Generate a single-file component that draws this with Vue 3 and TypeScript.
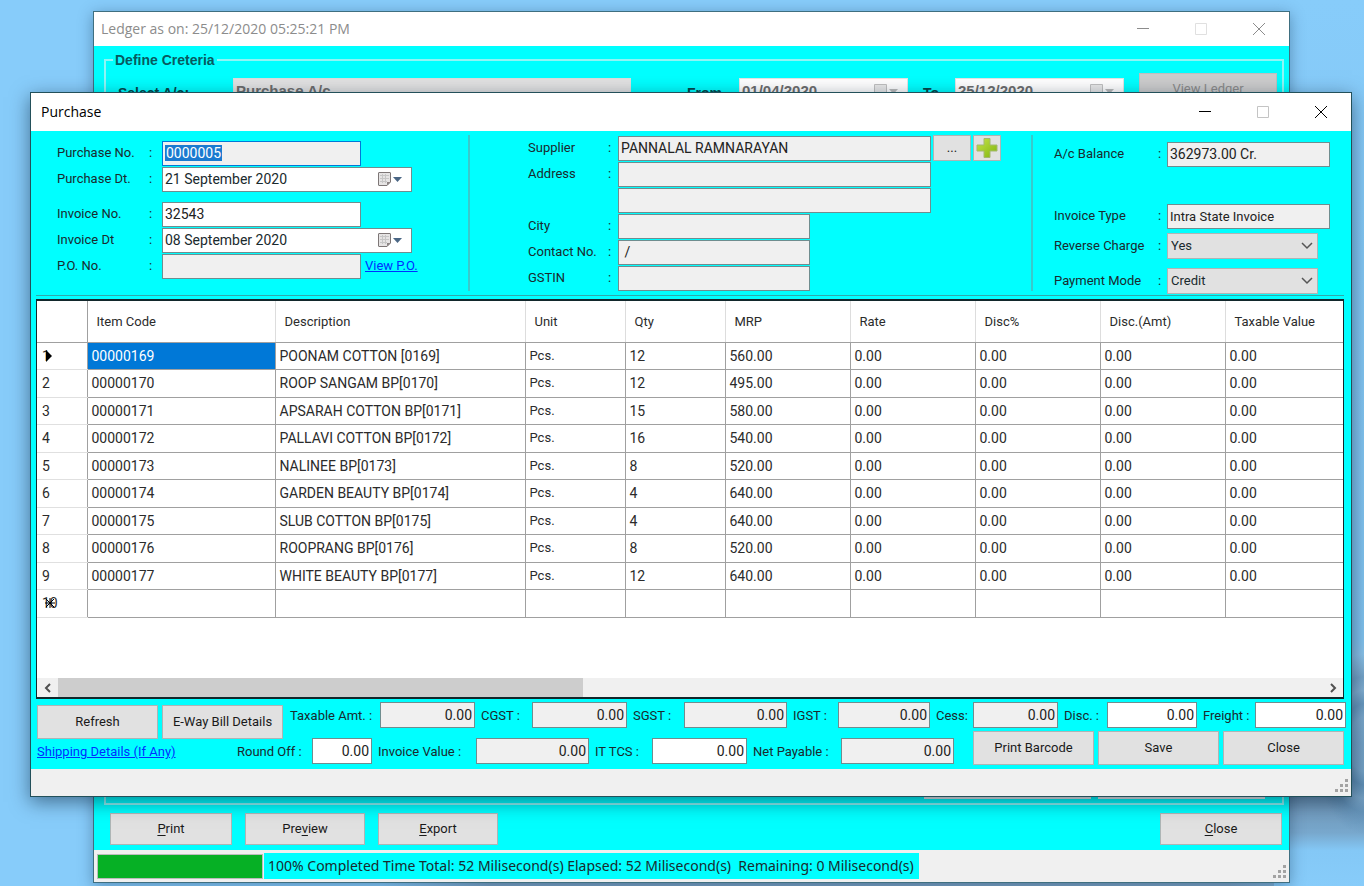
<script setup lang="ts">
import { ref } from 'vue'

interface Item {
  code: string
  name: string
  qty: string
  mrp: string
}

interface Amount {
  id: string
  label: string
  editable?: boolean
}

const items: Item[] = [
  { code: '00000169', name: 'POONAM COTTON [0169]', qty: '12', mrp: '560.00' },
  { code: '00000170', name: 'ROOP SANGAM BP[0170]', qty: '12', mrp: '495.00' },
  { code: '00000171', name: 'APSARAH COTTON BP[0171]', qty: '15', mrp: '580.00' },
  { code: '00000172', name: 'PALLAVI COTTON BP[0172]', qty: '16', mrp: '540.00' },
  { code: '00000173', name: 'NALINEE BP[0173]', qty: '8', mrp: '520.00' },
  { code: '00000174', name: 'GARDEN BEAUTY BP[0174]', qty: '4', mrp: '640.00' },
  { code: '00000175', name: 'SLUB COTTON BP[0175]', qty: '4', mrp: '640.00' },
  { code: '00000176', name: 'ROOPRANG BP[0176]', qty: '8', mrp: '520.00' },
  { code: '00000177', name: 'WHITE BEAUTY BP[0177]', qty: '12', mrp: '640.00' },
]

const headers = ['Item Code', 'Description', 'Unit', 'Qty', 'MRP', 'Rate', 'Disc%', 'Disc.(Amt)', 'Taxable Value']

const taxes: Amount[] = [
  { id: 'taxable', label: 'Taxable Amt. :' },
  { id: 'cgst', label: 'CGST :' },
  { id: 'sgst', label: 'SGST :' },
  { id: 'igst', label: 'IGST :' },
  { id: 'cess', label: 'Cess:' },
  { id: 'disc', label: 'Disc. :', editable: true },
  { id: 'freight', label: 'Freight :', editable: true },
]

const totals: Amount[] = [
  { id: 'round', label: 'Round Off :', editable: true },
  { id: 'value', label: 'Invoice Value :' },
  { id: 'tcs', label: 'IT TCS :', editable: true },
  { id: 'net', label: 'Net Payable :' },
]

const reverseCharge = ref('Yes')
const paymentMode = ref('Credit')
</script>

<template>
  <div class="desktop">
    <section class="window ledger" aria-label="Ledger">
      <header class="titlebar">
        <span class="title">Ledger as on: 25/12/2020 05:25:21 PM</span>
        <button class="cap" aria-label="Minimize"><svg width="14" height="14"><path d="M1 6.5h12" /></svg></button>
        <button class="cap off" aria-label="Maximize" disabled><svg width="14" height="14"><path d="M1.5 1.5h11v11h-11z" /></svg></button>
        <button class="cap" aria-label="Close window"><svg width="14" height="14"><path d="M1 1l12 12M13 1L1 13" /></svg></button>
      </header>
      <div class="ledger-body">
        <fieldset class="criteria">
          <legend>Define Creteria</legend>
          <div class="criteria-row">
            <label for="account">Select A/c:</label>
            <input id="account" class="box" value="Purchase A/c" disabled />
            <label for="from">From</label>
            <span class="date dim"><input id="from" value="01/04/2020" disabled /><svg class="cal" width="28" height="16" viewBox="0 0 28 16"><path class="sheet" d="M1.5 1.5h12v12h-12z" /><path class="arrow" d="M16 6h9l-4.500 5z" /></svg></span>
            <label for="to">To</label>
            <span class="date dim"><input id="to" value="25/12/2020" disabled /><svg class="cal" width="28" height="16" viewBox="0 0 28 16"><path class="sheet" d="M1.5 1.5h12v12h-12z" /><path class="arrow" d="M16 6h9l-4.500 5z" /></svg></span>
            <button class="btn view" disabled>View Ledger</button>
          </div>
          <div class="sums">
            <input class="box" value="11483441.0" aria-label="Debit total" readonly />
            <input class="box" aria-label="Credit total" readonly />
          </div>
        </fieldset>
        <div class="actions">
          <button class="btn end"><u>P</u>rint</button>
          <button class="btn">Pre<u>v</u>iew</button>
          <button class="btn"><u>E</u>xport</button>
          <button class="btn end last"><u>C</u>lose</button>
        </div>
      </div>
      <footer class="status">
        <span class="progress" role="progressbar" aria-valuenow="100"></span>
        <span class="message">100% Completed Time Total: 52 Milisecond(s) Elapsed: 52 Milisecond(s)&nbsp; Remaining: 0 Milisecond(s)</span>
        <svg class="grip" width="14" height="14"><path d="M10 0h3v3h-3zM5 5h3v3h-3zM10 5h3v3h-3zM0 10h3v3h-3zM5 10h3v3h-3zM10 10h3v3h-3z" /></svg>
      </footer>
    </section>

    <main class="window purchase">
      <header class="titlebar">
        <span class="title">Purchase</span>
        <button class="cap" aria-label="Minimize"><svg width="14" height="14"><path d="M1 6.5h12" /></svg></button>
        <button class="cap off" aria-label="Maximize" disabled><svg width="14" height="14"><path d="M1.5 1.5h11v11h-11z" /></svg></button>
        <button class="cap" aria-label="Close window"><svg width="14" height="14"><path d="M1 1l12 12M13 1L1 13" /></svg></button>
      </header>

      <div class="body">
        <div class="panels">
          <section class="panel invoice">
            <div class="row"><label for="pno">Purchase No.</label><i>:</i><span class="box focus"><mark>0000005</mark><input id="pno" readonly /></span></div>
            <div class="row"><label for="pdt">Purchase Dt.</label><i>:</i>
              <span class="date"><input id="pdt" value="21 September 2020" /><svg class="cal" width="28" height="16" viewBox="0 0 28 16"><path class="sheet" d="M2 1.5h11q.5 0 .5 .5v9l-3.500 3.500h-8q-.5 0-.5-.5v-12q0-.5 .5-.5z" /><path class="lines" d="M3 4.500h9M3 7.500h9M3 10.500h7M5.500 3v9M8.500 3v9" /><path class="fold" d="M13.500 11h-3.500v3.500z" /><path class="arrow" d="M16 6h9l-4.500 5z" /></svg></span>
            </div>
            <div class="row apart"><label for="ino">Invoice No.</label><i>:</i><input id="ino" class="box white" value="32543" /></div>
            <div class="row"><label for="idt">Invoice Dt</label><i>:</i>
              <span class="date"><input id="idt" value="08 September 2020" /><svg class="cal" width="28" height="16" viewBox="0 0 28 16"><path class="sheet" d="M2 1.5h11q.5 0 .5 .5v9l-3.500 3.500h-8q-.5 0-.5-.5v-12q0-.5 .5-.5z" /><path class="lines" d="M3 4.500h9M3 7.500h9M3 10.500h7M5.500 3v9M8.500 3v9" /><path class="fold" d="M13.500 11h-3.500v3.500z" /><path class="arrow" d="M16 6h9l-4.500 5z" /></svg></span>
            </div>
            <div class="row"><label for="po">P.O. No.</label><i>:</i><input id="po" class="box" readonly /><a href="#">View P.O.</a></div>
          </section>

          <section class="panel supplier">
            <div class="row"><label for="sup">Supplier</label><i>:</i><input id="sup" class="box wide" value="PANNALAL RAMNARAYAN" readonly />
              <button class="btn small" aria-label="Browse suppliers">...</button>
              <button class="btn small plus" aria-label="Add supplier">
                <svg width="24" height="22" viewBox="0 0 24 22">
                  <defs><linearGradient id="leaf" x1="0" y1="0" x2="1" y2="1"><stop offset="0" stop-color="#c6e34a" /><stop offset="1" stop-color="#7fb50d" /></linearGradient></defs>
                  <path fill="url(#leaf)" stroke="#a3b870" d="M9 1.500h6v6.500h7v6h-7v6.500h-6v-6.500h-7v-6h7z" />
                </svg>
              </button>
            </div>
            <div class="row"><label for="ad1">Address</label><i>:</i><input id="ad1" class="box wide" readonly /></div>
            <div class="row"><label></label><i></i><input class="box wide" aria-label="Address line 2" readonly /></div>
            <div class="row"><label for="city">City</label><i>:</i><input id="city" class="box" readonly /></div>
            <div class="row"><label for="tel">Contact No.</label><i>:</i><input id="tel" class="box" value=" /" readonly /></div>
            <div class="row"><label for="gst">GSTIN</label><i>:</i><input id="gst" class="box" readonly /></div>
          </section>

          <section class="panel payment">
            <div class="row"><label for="bal">A/c Balance</label><i>:</i><input id="bal" class="box" value="362973.00 Cr." readonly /></div>
            <div class="row type"><label for="typ">Invoice Type</label><i>:</i><input id="typ" class="box text" value="Intra State Invoice" readonly /></div>
            <div class="row charge"><label for="rev">Reverse Charge</label><i>:</i>
              <span class="combo"><select id="rev" v-model="reverseCharge"><option>Yes</option><option>No</option></select><svg width="12" height="8"><path d="M1 1l5 5 5-5" /></svg></span>
            </div>
            <div class="row mode"><label for="mod">Payment Mode</label><i>:</i>
              <span class="combo"><select id="mod" v-model="paymentMode"><option>Credit</option><option>Cash</option></select><svg width="12" height="8"><path d="M1 1l5 5 5-5" /></svg></span>
            </div>
          </section>
        </div>

        <div class="grid">
          <table>
            <colgroup><col class="c0" /><col class="c1" /><col class="c2" /><col class="c3" /><col class="c3" /><col class="c4" /><col class="c4" /><col class="c4" /><col class="c4" /><col /></colgroup>
            <thead>
              <tr><th aria-label="Row"></th><th v-for="h in headers" :key="h">{{ h }}</th></tr>
            </thead>
            <tbody>
              <tr v-for="(item, n) in items" :key="item.code">
                <th scope="row"><span class="mark">{{ n + 1 }}<svg v-if="n === 0" width="10" height="12"><path d="M2 0l6 6-6 6z" /></svg></span></th>
                <td :class="{ current: n === 0 }">{{ item.code }}</td>
                <td>{{ item.name }}</td>
                <td class="unit">Pcs.</td>
                <td>{{ item.qty }}</td>
                <td>{{ item.mrp }}</td>
                <td v-for="k in 4" :key="k">0.00</td>
              </tr>
              <tr>
                <th scope="row"><span class="mark">10<svg class="star" width="12" height="12"><path d="M6 1v10M1 6h10M2 2l8 8M10 2l-8 8" /></svg></span></th>
                <td v-for="k in 9" :key="k"></td>
              </tr>
            </tbody>
          </table>
          <div class="scroll">
            <button aria-label="Scroll left"><svg width="10" height="10"><path d="M7 1L3 5l4 4" /></svg></button>
            <span class="track"><span class="thumb"></span></span>
            <button aria-label="Scroll right"><svg width="10" height="10"><path d="M3 1l4 4-4 4" /></svg></button>
          </div>
        </div>

        <div class="foot taxes">
          <button class="btn tall">Refresh</button>
          <button class="btn tall">E-Way Bill Details</button>
          <template v-for="t in taxes" :key="t.id">
            <label :for="t.id">{{ t.label }}</label>
            <input :id="t.id" class="box num" :class="{ white: t.editable }" value="0.00" :readonly="!t.editable" />
          </template>
        </div>
        <div class="foot totals">
          <a href="#">Shipping Details (If Any)</a>
          <template v-for="t in totals" :key="t.id">
            <label :for="t.id">{{ t.label }}</label>
            <input :id="t.id" class="box num" :class="{ white: t.editable }" value="0.00" :readonly="!t.editable" />
          </template>
          <span></span>
          <button class="btn tall">Print Barcode</button>
          <button class="btn tall">Save</button>
          <button class="btn tall">Close</button>
        </div>
      </div>
      <footer class="status">
        <svg class="grip" width="14" height="14"><path d="M10 0h3v3h-3zM5 5h3v3h-3zM10 5h3v3h-3zM0 10h3v3h-3zM5 10h3v3h-3zM10 10h3v3h-3z" /></svg>
      </footer>
    </main>
  </div>
</template>

<style>
body {
  background: #87ccfa;
}
</style>

<style scoped>
* {
  box-sizing: border-box;
}
.desktop {
  position: relative;
  min-height: 100vh;
  overflow: hidden;
  font: 13px/16px Roboto, "Liberation Sans", sans-serif;
  color: #1a2a2e;
  background:
    radial-gradient(ellipse 50px 90px at 100% 84%, rgba(120, 165, 200, 0.6) 0 30%, rgba(85, 135, 175, 0.6) 45%, rgba(120, 165, 200, 0.5) 60%, rgba(85, 135, 175, 0.5) 75%, transparent) no-repeat,
    linear-gradient(to bottom, #87ccfa 0, #80c2ee 72%, #94c2e4 76%, #6c9cc2 84%, #7099bb 91%, #78a8cd 94%, #84c8f6 96%, #87ccfa) right / 90px 100% no-repeat,
    linear-gradient(to right, #87ccfa 0 28%, #7ba3c4 36% 90%, #87ccfa) bottom / 100% 20px no-repeat,
    #87ccfa;
}
button,
input,
select {
  font: inherit;
  color: inherit;
  border-radius: 0;
  margin: 0;
  min-width: 0;
}
.window {
  position: absolute;
  display: flex;
  flex-direction: column;
  border: 1px solid #3f6f80;
  background: #0ff;
}
.ledger {
  inset: 11px 74px 3px 93px;
  box-shadow: 0 3px 14px rgba(0, 30, 60, 0.35);
}
.purchase {
  inset: 92px 12px 89px 30px;
  box-shadow: 0 5px 18px rgba(0, 20, 40, 0.5);
  border-color: #23505a;
}
.titlebar {
  display: flex;
  align-items: center;
  flex: none;
  height: 34px;
  padding: 0 23px 0 7px;
  background: #fff;
  color: #000;
  font: 14px/20px "Open Sans", "Noto Sans", sans-serif;
}
.purchase .titlebar {
  height: 38px;
  padding: 0 23px 0 10px;
}
.ledger .titlebar {
  color: #8c8c8c;
}
.title {
  flex: 1;
}
.cap {
  display: flex;
  padding: 0;
  border: 0;
  background: none;
  margin-left: 44px;
}
.cap svg {
  fill: none;
  stroke: currentColor;
  stroke-width: 1;
}
.cap.off {
  color: #c4c4c4;
}
.ledger .cap.off {
  color: #e0e0e0;
}
.ledger-body {
  flex: 1;
  display: flex;
  flex-direction: column;
  padding: 6px 5px 0 10px;
}
.criteria {
  flex: 1;
  display: flex;
  flex-direction: column;
  min-width: 0;
  margin: 0;
  padding: 5px 5px 4px 12px;
  border: 2px solid #8ff5f5;
  font: 700 14px/16px "Liberation Sans", sans-serif;
}
.criteria legend {
  padding: 0 2px;
  margin-left: -5px;
  color: #075a60;
}
.criteria-row {
  display: flex;
  align-items: flex-start;
}
.criteria-row label {
  color: #04484c;
  padding-top: 12px;
}
.criteria-row label:nth-of-type(1) {
  width: 115px;
}
.criteria-row label:nth-of-type(2) {
  width: 52px;
  margin-left: 56px;
}
.criteria-row label:nth-of-type(3) {
  width: 32px;
  margin-left: 15px;
}
.criteria-row .box {
  flex: 1;
  border-color: #ddd;
  background: #e2e2e2;
  color: #6d6d6d;
  margin-top: 5px;
  font-size: 15px;
}
.criteria-row .date {
  margin-top: 5px;
  width: 169px;
  border-color: #e4e4e4;
  font-size: 15px;
}
.dim {
  color: #6d6d6d;
}
.view {
  width: 138px;
  height: 32px;
  margin-left: 15px;
  font: 13px/16px Roboto, sans-serif;
}
.sums {
  display: flex;
  justify-content: flex-end;
  gap: 7px;
  margin-top: auto;
  padding-right: 12px;
}
.sums .box {
  width: 167px;
  padding: 7px 4px 0;
  text-align: right;
  border-color: #eee;
}
.actions {
  display: flex;
  gap: 13px;
  padding: 8px 2px 5px 6px;
}
.actions .btn {
  width: 120px;
  height: 32px;
}
.actions .end {
  width: 122px;
}
.actions .last {
  margin-left: auto;
}
.btn {
  display: flex;
  align-items: center;
  justify-content: center;
  padding: 0;
  border: 1px solid #adb5b5;
  background: #e1e1e1;
  color: #1a1a1a;
}
.btn:disabled {
  background: #ccc;
  border-color: #bfbfbf;
  color: #8a8a8a;
}
.btn u {
  text-underline-offset: 2px;
}
.status {
  display: flex;
  align-items: center;
  flex: none;
  height: 27px;
  background: #f0f0f0;
}
.ledger .status {
  height: 32px;
  padding-left: 3px;
}
.progress {
  width: 166px;
  height: 25px;
  border: 1px solid #bcbcbc;
  background: #06b025;
}
.message {
  margin-left: 1px;
  padding: 0 5px 0 4px;
  background: #0ff;
  font: 14px/26px "Noto Sans", "Open Sans", sans-serif;
  white-space: nowrap;
}
.grip {
  margin: auto 2px 3px auto;
  fill: #a3a3a3;
}

.body {
  flex: 1;
  display: flex;
  flex-direction: column;
  min-height: 0;
  padding: 4px 5px 4px;
}
.panels {
  display: grid;
  grid-template-columns: 432fr 563fr 315fr;
  margin-bottom: 8px;
}
.panel {
  height: 156px;
}
.panel + .panel {
  border-left: 2px solid #39c9cb;
}
.invoice {
  padding: 5px 0 0 21px;
}
.supplier {
  padding-left: 58px;
}
.payment {
  padding: 6px 0 0 21px;
}
.row {
  display: flex;
  align-items: center;
  height: 26px;
}
.apart {
  margin-top: 9px;
}
.row label {
  flex: none;
  width: 92px;
}
.row i {
  flex: none;
  width: 13px;
  font-style: normal;
}
.supplier label {
  width: 80px;
}
.supplier i {
  width: 10px;
}
.payment label {
  width: 104px;
}
.payment i {
  width: 9px;
}
.type {
  margin-top: 36px;
}
.charge {
  margin-top: 4px;
}
.mode {
  margin-top: 9px;
}
.box {
  height: 25px;
  width: 199px;
  padding: 0 2px;
  border: 1px solid #6f8d8f;
  background: #f0f0f0;
  outline: 0;
  font-size: 14px;
  color: #222;
}
.box.white {
  background: #fff;
}
.focus {
  display: flex;
  align-items: center;
  border-color: #0078d7;
}
.focus input {
  flex: 1;
  border: 0;
  background: none;
  outline: 0;
}
mark {
  padding: 0 1px;
  background: #1a7ad0;
  color: #fff;
}
.supplier .box {
  width: 192px;
}
.supplier .wide {
  width: 313px;
}
.payment .box {
  width: 163px;
}
.box.text {
  font-size: 13px;
}
.date {
  display: flex;
  align-items: center;
  width: 250px;
  height: 25px;
  padding: 0 6px 0 0;
  border: 1px solid #6f8d8f;
  background: #fff;
  font-size: 14px;
}
.date input {
  flex: 1;
  border: 0;
  padding: 0 2px;
  background: none;
}
.cal {
  flex: none;
}
.sheet {
  fill: #e6e4e4;
  stroke: #7d7676;
}
.lines {
  fill: none;
  stroke: #c6c6c6;
}
.fold {
  fill: #8a8383;
}
.arrow {
  fill: #4a6684;
}
.dim .sheet {
  fill: #e8e8e8;
  stroke: #c0c0c0;
}
.dim .arrow {
  fill: #bbb;
}
a {
  color: #0030ff;
  text-decoration: underline;
}
.row a {
  margin-left: 4px;
}
.small {
  width: 38px;
  height: 26px;
  margin-left: 2px;
}
.plus {
  width: 28px;
}
.combo {
  position: relative;
  display: flex;
  width: 151px;
}
.combo select {
  flex: 1;
  height: 26px;
  padding: 0 3px;
  border: 1px solid #adb5b5;
  background: #e1e1e1;
  appearance: none;
}
.combo svg {
  position: absolute;
  right: 5px;
  top: 9px;
  fill: none;
  stroke: #555;
  stroke-width: 1.5;
  pointer-events: none;
}

.grid {
  flex: 1;
  display: flex;
  flex-direction: column;
  min-height: 0;
  margin-right: 2px;
  overflow: hidden;
  border: 2px solid #12282c;
  border-right-width: 1px;
  border-left-width: 1px;
  background: #fff;
  box-shadow: 0 -3px 0 #0ff, 0 -4px 0 #2fa9ab;
}
table {
  width: 100%;
  border-collapse: collapse;
  table-layout: fixed;
  font-size: 14px;
  color: #2b2b2b;
}
.c0 { width: 50px; }
.c1 { width: 188px; }
.c2 { width: 250px; }
.c3 { width: 100px; }
.c4 { width: 125px; }
thead th {
  height: 41px;
  padding: 2px 0 0 9px;
  font-size: 13px;
  font-weight: 400;
  text-align: left;
  white-space: nowrap;
  border-right: 1px solid #ddd;
  border-bottom: 1px solid #a0a0a0;
}
thead th:first-child {
  border-right-color: #a0a0a0;
}
tbody tr {
  height: 27px;
}
tbody tr:nth-child(even) {
  height: 28px;
}
tbody td {
  padding: 0 4px;
  border: 1px solid #a0a0a0;
  white-space: nowrap;
}
tbody th {
  padding: 0 5px;
  font-weight: 400;
  text-align: left;
  border-bottom: 1px solid #e0e0e0;
}
tr > :last-child {
  border-right: 0;
}
td.unit {
  font-size: 13px;
}
td.current {
  background: #0078d7;
  color: #fff;
}
.mark {
  position: relative;
}
.mark svg {
  position: absolute;
  left: 2px;
  top: 2px;
}
.star {
  stroke: #000;
  fill: none;
}
.scroll {
  display: flex;
  margin-top: auto;
  height: 19px;
  background: #f0f0f0;
}
.scroll button {
  display: flex;
  align-items: center;
  justify-content: center;
  width: 21px;
  padding: 0;
  border: 0;
  background: none;
}
.scroll svg {
  fill: none;
  stroke: #505050;
  stroke-width: 2;
}
.track {
  flex: 1;
}
.thumb {
  display: block;
  width: 41.5%;
  height: 100%;
  background: #cdcdcd;
}

.foot {
  display: grid;
  align-items: start;
  flex: none;
  margin-left: 1px;
}
.foot label {
  white-space: nowrap;
}
.taxes {
  grid-template-columns: 125fr 128fr 90fr 101fr 51fr 101fr 51fr 109fr 45fr 98fr 37fr 91fr 43fr 96fr 52fr 97fr;
  height: 29px;
  margin-top: 3px;
  margin-right: -6px;
}
.totals {
  grid-template-columns: 200fr 75fr 66fr 98fr 119fr 57fr 101fr 88fr 119fr 13fr 125fr 125fr 125fr;
  height: 34px;
  margin-right: -2px;
}
.foot .box {
  width: auto;
  height: 26px;
  margin-right: 6px;
  text-align: right;
}
.taxes label {
  padding-top: 6px;
}
.totals label,
.totals a {
  padding-top: 13px;
}
.totals .box {
  margin-top: 7px;
}
.tall {
  height: 34px;
  margin-right: 4px;
}
.taxes .tall {
  margin-top: 3px;
}
.taxes .tall + .tall {
  margin-right: 7px;
}
</style>
